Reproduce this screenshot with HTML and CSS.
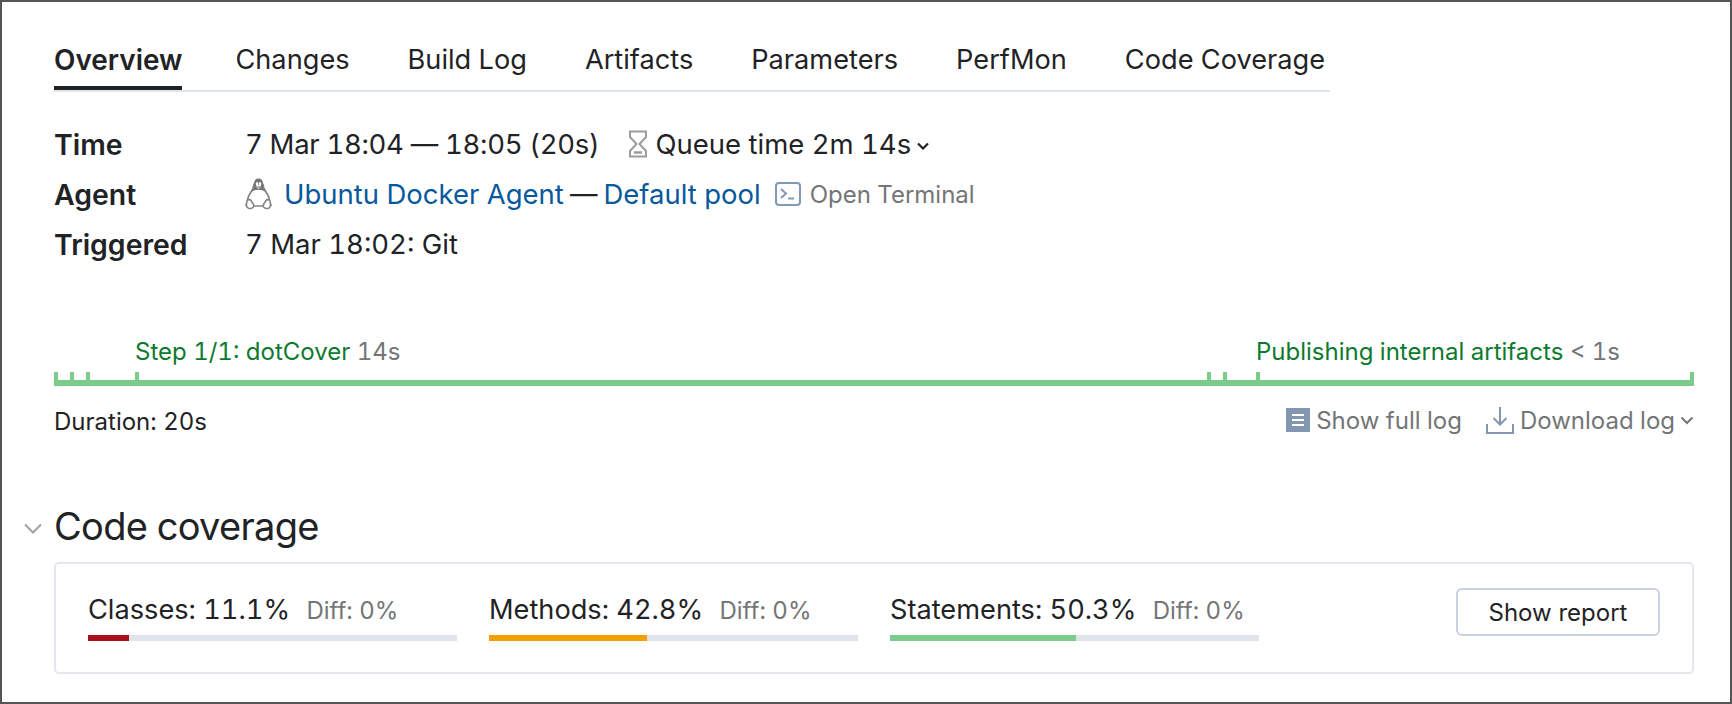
FILE: index.html
```html
<!DOCTYPE html>
<html lang="en">
<head>
  <meta charset="UTF-8">
  <title>Build Overview</title>
  <link rel="stylesheet" href="styles.css">
</head>
<body>
  <div class="page">
    <nav class="tabs">
      <a class="tab active">Overview</a>
      <a class="tab">Changes</a>
      <a class="tab">Build Log</a>
      <a class="tab">Artifacts</a>
      <a class="tab">Parameters</a>
      <a class="tab">PerfMon</a>
      <a class="tab">Code Coverage</a>
    </nav>

    <div class="info">
      <div class="label">Time</div>
      <div class="value">
        <span class="date">7 Mar 18:04 — 18:05 (20s)</span>
        <svg class="icon-hourglass" viewBox="0 0 20 28" width="20" height="28" fill="none" stroke="#9c9c9c" stroke-width="2">
          <path d="M2 1.500h16v5.500l-6.500 7 6.500 7v5.500h-16v-5.500l6.500-7-6.500-7z"/>
          <path d="M6 22.500h8" stroke-width="2.500"/>
        </svg>
        <span class="queue">Queue time 2m 14s</span>
        <svg class="chev-small" viewBox="0 0 12 8" width="12" height="8" fill="none" stroke="#1f2326" stroke-width="2.200"><path d="M1 1.500l5 5 5-5"/></svg>
      </div>
      <div class="label">Agent</div>
      <div class="value">
        <svg class="icon-linux" viewBox="0 0 27 32" width="27" height="32">
          <path d="M9 6.500c0 3-1 4.500-3 7.500-2 3-3.500 6-3.500 9 0 2 1 4 3 5h16c2-1 3-3 3-5 0-3-1.500-6-3.500-9-2-3-3-4.500-3-7.500z" fill="#fff" stroke="#858585" stroke-width="1.700"/>
          <path d="M13.500 .5c-3.400 0-4.600 2.700-4.600 5.800l-.3 3.700c-1 1.600-2 3-2.900 4.600 2.200-2 4.600-2.800 7.800-2.800s5.600.8 7.800 2.800c-.9-1.600-1.900-3-2.900-4.600l-.3-3.700c0-3.100-1.200-5.800-4.600-5.800z" fill="#767676"/>
          <path d="M10.800 5.300c0-1.300 2.300-1.300 2.400 0v2h.6v-2c.1-1.300 2.400-1.300 2.400 0 0 1.300-.2 2.400-.8 3.200h-3.800c-.6-.8-.8-1.900-.8-3.200z" fill="#fff"/>
          <path d="M10.800 8.300h5.400l-1.700 2.400h-2z" fill="#b5b5b5"/>
          <path d="M1 27c.5-1 .8-2.500 1-4 .4-1.500 3-2 4-.5l2.500 4c1 2-.5 3.500-2.500 4-2 .3-5-1-4.500-3.500z" fill="#fff" stroke="#858585" stroke-width="1.600"/>
          <path d="M26 27c-.5-1-.8-2.500-1-4-.4-1.500-3-2-4-.5l-2.500 4c-1 2 .5 3.500 2.500 4 2 .3 5-1 4.500-3.500z" fill="#fff" stroke="#858585" stroke-width="1.600"/>
        </svg>
        <a class="link">Ubuntu Docker Agent</a>
        <span>—</span>
        <a class="link">Default pool</a>
        <svg class="icon-term" viewBox="0 0 26 24" width="26" height="24" fill="none" stroke="#8299b5" stroke-width="2">
          <rect x="1" y="1" width="24" height="22" rx="3"/>
          <path d="M6 7l5 4.500-5 4.500"/>
          <path d="M13 16.500h6"/>
        </svg>
        <span class="muted term-text">Open Terminal</span>
      </div>
      <div class="label">Triggered</div>
      <div class="value">7 Mar 18:02: Git</div>
    </div>

    <div class="timeline">
      <span class="stage" style="left: 81px">Step 1/1: dotCover <em>14s</em></span>
      <span class="stage" style="left: 1202px">Publishing internal artifacts <em>&lt; 1s</em></span>
      <i class="tick" style="left: 0"></i>
      <i class="tick" style="left: 16px"></i>
      <i class="tick" style="left: 32px"></i>
      <i class="tick" style="left: 81px"></i>
      <i class="tick" style="left: 1153px"></i>
      <i class="tick" style="left: 1169px"></i>
      <i class="tick" style="left: 1202px"></i>
      <i class="tick" style="left: 1636px"></i>
    </div>

    <div class="log-row">
      <span>Duration: 20s</span>
      <div class="log-actions">
        <svg viewBox="0 0 24 24" width="24" height="24"><rect width="24" height="24" fill="#8497b0"/><path d="M6 7h12M6 12h12M6 17h12" stroke="#fff" stroke-width="2"/></svg>
        <span class="log-link">Show full log</span>
        <svg class="icon-download" viewBox="0 0 28 28" width="28" height="28" fill="none" stroke="#8497b0" stroke-width="2">
          <path d="M14 1v17M7.500 12l6.500 6.500 6.500-6.500"/>
          <path d="M1 18v9h26v-9"/>
        </svg>
        <span class="log-link">Download log</span>
        <svg viewBox="0 0 14 9" width="14" height="9" fill="none" stroke="#737577" stroke-width="2"><path d="M1.500 1.500l5.500 5.500 5.500-5.500"/></svg>
      </div>
    </div>

    <div class="section-head">
      <svg viewBox="0 0 18 11" width="18" height="11" fill="none" stroke="#a0a3a6" stroke-width="2"><path d="M1 1.500l8 8 8-8"/></svg>
      <h2>Code coverage</h2>
    </div>

    <div class="card">
      <div class="metric">
        <div class="metric-text">Classes: 11.1% <span class="diff">Diff: 0%</span></div>
        <div class="bar"><div class="fill red" style="width: 11.100%"></div></div>
      </div>
      <div class="metric">
        <div class="metric-text">Methods: 42.8% <span class="diff">Diff: 0%</span></div>
        <div class="bar"><div class="fill orange" style="width: 42.800%"></div></div>
      </div>
      <div class="metric">
        <div class="metric-text">Statements: 50.3% <span class="diff">Diff: 0%</span></div>
        <div class="bar"><div class="fill green" style="width: 50.300%"></div></div>
      </div>
      <button class="report-btn">Show report</button>
    </div>
  </div>
</body>
</html>
```

FILE: styles.css
```css
* {
  box-sizing: border-box;
}

body {
  margin: 0;
  background: #fff;
  color: #1f2326;
  font-family: 'Inter', sans-serif;
  font-variant-numeric: tabular-nums;
}

.page {
  width: 1732px;
  height: 704px;
  border: 2px solid #555;
  padding: 0 36px 0 52px;
  overflow: hidden;
}

.tabs {
  display: flex;
  gap: 58px;
  width: 1276px;
  height: 90px;
  padding-top: 42px;
  border-bottom: 2px solid #dfe5eb;
  font-size: 27.200px;
}

.tab {
  height: 46px;
  line-height: 32px;
}

.tab.active {
  font-weight: 600;
  font-size: 27.900px;
  border-bottom: 4px solid #1f2326;
  margin-bottom: -2px;
  margin-right: -5px;
}

.info {
  display: grid;
  grid-template-columns: 191px 1fr;
  grid-auto-rows: 50px;
  margin-top: 27px;
  font-size: 27.500px;
  align-items: center;
}

.label {
  font-weight: 600;
  font-size: 28.400px;
}

.value {
  display: flex;
  align-items: center;
}

.date {
  letter-spacing: -0.300px;
}

.icon-hourglass {
  margin-left: 28px;
  margin-right: 8px;
}

.chev-small {
  margin-left: 6px;
  margin-top: 4px;
}

.icon-linux {
  margin-right: 12px;
}

.link {
  color: #08599c;
}

.value > span + .link {
  margin-left: 6px;
}

.value > .link + span {
  margin-left: 6px;
}

.icon-term {
  margin-left: 14px;
}

.muted {
  color: #737577;
}

.term-text {
  font-size: 24px;
  margin-left: 9px;
}

.timeline {
  position: relative;
  height: 68px;
  margin-top: 49px;
  border-bottom: 6px solid #7acb8c;
}

.stage {
  position: absolute;
  top: 20px;
  font-size: 24px;
  line-height: 28px;
  color: #0c7a2e;
  white-space: nowrap;
}

.stage em {
  font-style: normal;
  color: #737577;
}

.tick {
  position: absolute;
  bottom: 0;
  width: 4px;
  height: 8px;
  background: #7acb8c;
}

.log-row {
  display: flex;
  justify-content: space-between;
  align-items: center;
  height: 42px;
  margin-top: 14px;
  font-size: 24px;
}

.log-actions {
  display: flex;
  align-items: center;
  margin-top: -2px;
  color: #737577;
}

.log-link {
  margin-left: 6px;
}

.icon-download {
  margin-left: 24px;
}

.log-actions > svg:last-child {
  margin-left: 5px;
}

.section-head {
  display: flex;
  align-items: center;
  margin: 59px 0 0 -30px;
  height: 50px;
}

.section-head svg {
  margin-right: 12px;
  margin-top: 4px;
}

h2 {
  margin: 0;
  font-size: 38px;
  font-weight: 400;
  letter-spacing: -0.700px;
}

.card {
  display: flex;
  align-items: flex-start;
  height: 112px;
  margin-top: 11px;
  padding: 27px 32px 0 32px;
  border: 2px solid #e3e7ec;
  border-radius: 5px;
}

.metric {
  width: 369px;
  margin-right: 32px;
}

.metric-text {
  height: 44px;
  font-size: 27.200px;
  line-height: 38px;
  white-space: nowrap;
}

.diff {
  margin-left: 9px;
  font-size: 24px;
  color: #737577;
}

.bar {
  height: 6px;
  background: #dfe4eb;
}

.fill {
  height: 6px;
}

.red {
  background: #a90f1a;
}

.orange {
  background: #f0a000;
}

.green {
  background: #7acb8c;
}

.report-btn {
  width: 204px;
  height: 48px;
  margin: -3px 0 0 auto;
  background: #fff;
  border: 2px solid #c6d2de;
  border-radius: 6px;
  font-family: inherit;
  font-size: 24px;
  color: #1f2326;
}
```
